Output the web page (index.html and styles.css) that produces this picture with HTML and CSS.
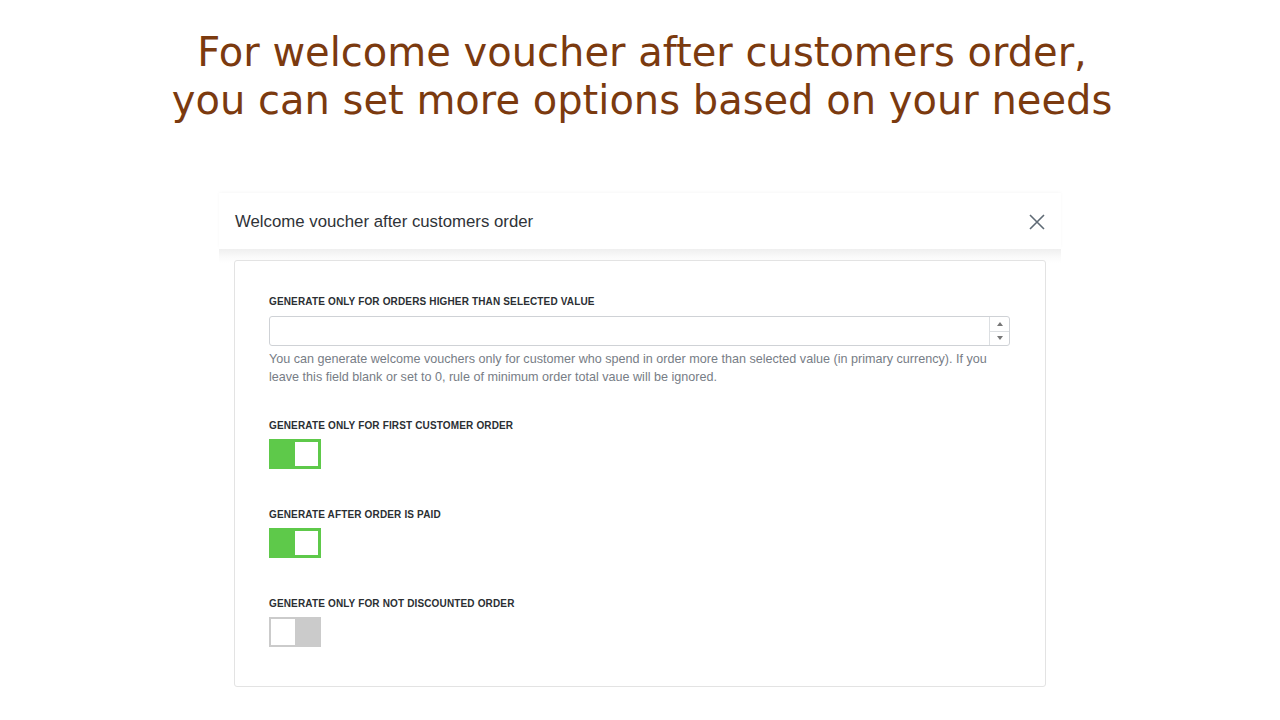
FILE: index.html
```html
<!DOCTYPE html>
<html>
<head>
<meta charset="utf-8">
<link rel="stylesheet" href="styles.css">
</head>
<body>
<h1 class="headline">For welcome voucher after customers order,<br>you can set more options based on your needs</h1>
<div class="modal">
  <div class="modal-header">
    <span class="modal-title">Welcome voucher after customers order</span>
    <svg class="close" width="16" height="16" viewBox="0 0 16 16"><path d="M1 1L15 15M15 1L1 15" stroke="#5f6a75" stroke-width="1.6" fill="none"/></svg>
  </div>
  <div class="modal-body">
    <div class="card">
      <div class="field first">
        <div class="label">Generate only for orders higher than selected value</div>
        <div class="input">
          <div class="spinner">
            <div class="spin"><svg width="6" height="4" viewBox="0 0 6 4"><path d="M0 4L3 0L6 4Z" fill="#777"/></svg></div>
            <div class="spin"><svg width="6" height="4" viewBox="0 0 6 4"><path d="M0 0L3 4L6 0Z" fill="#777"/></svg></div>
          </div>
        </div>
        <p class="help">You can generate welcome vouchers only for customer who spend in order more than selected value (in primary currency). If you leave this field blank or set to 0, rule of minimum order total vaue will be ignored.</p>
      </div>
      <div class="field">
        <div class="label">Generate only for first customer order</div>
        <div class="toggle on"><span class="knob"></span></div>
      </div>
      <div class="field">
        <div class="label">Generate after order is paid</div>
        <div class="toggle on"><span class="knob"></span></div>
      </div>
      <div class="field">
        <div class="label">Generate only for not discounted order</div>
        <div class="toggle off"><span class="knob"></span></div>
      </div>
    </div>
  </div>
</div>
</body>
</html>
```
FILE: styles.css
```css
html, body { margin: 0; padding: 0; background: #fff; }
body { width: 1280px; height: 720px; overflow: hidden; }
.headline {
  margin: 28px 0 0 4px;
  font-family: "DejaVu Sans", sans-serif;
  font-weight: normal;
  font-size: 40px;
  line-height: 48px;
  color: #7b3a0f;
  text-align: center;
}
.modal {
  width: 842px;
  margin: 69px 0 0 219px;
  font-family: "Liberation Sans", Arial, sans-serif;
}
.modal-header {
  height: 56px;
  display: flex;
  align-items: center;
  justify-content: space-between;
  padding: 2px 16px 0 16px;
  box-sizing: border-box;
  box-shadow: 0 -1px 3px rgba(0,0,0,0.03);
}
.modal-title { font-size: 16.8px; color: #2f3338; }
.close { margin-top: -1px; }
.modal-body {
  padding: 11px 15px 0;
  background: linear-gradient(#efefef, #fafafa 8px, #fff 14px);
}
.card {
  background: #fff;
  border: 1px solid #e3e3e3;
  border-radius: 3px;
  padding: 35px 35px 38px 34px;
  height: 427px;
  box-sizing: border-box;
}
.field { margin-bottom: 40px; }
.field.first { margin-bottom: 34px; }
.field:last-child { margin-bottom: 0; }
.label {
  font-size: 10px;
  font-weight: bold;
  text-transform: uppercase;
  letter-spacing: 0.15px;
  color: #2b2f33;
  line-height: 12px;
  margin-bottom: 7px;
}
.field.first .label { margin-bottom: 8px; }
.input {
  height: 30px;
  border: 1px solid #cfd2d6;
  border-radius: 3px;
  box-sizing: border-box;
  display: flex;
  justify-content: flex-end;
}
.spinner {
  width: 19px;
  border-left: 1px solid #dcdfe2;
  display: flex;
  flex-direction: column;
}
.spin { flex: 1; display: flex; align-items: center; justify-content: center; }
.spin + .spin { border-top: 1px solid #dcdfe2; }
.help {
  margin: 4px 0 0;
  font-size: 12.6px;
  line-height: 18px;
  color: #777d86;
  padding-right: 20px;
}
.toggle {
  width: 52px;
  height: 30px;
  box-sizing: border-box;
  display: flex;
}
.toggle.on { background: #5ec94a; padding: 3px; justify-content: flex-end; }
.toggle.off { background: #cbcbcb; padding: 2px; justify-content: flex-start; }
.knob { width: 23px; height: 24px; background: #fff; display: block; }
.toggle.off .knob { width: 24px; height: 26px; }
```
